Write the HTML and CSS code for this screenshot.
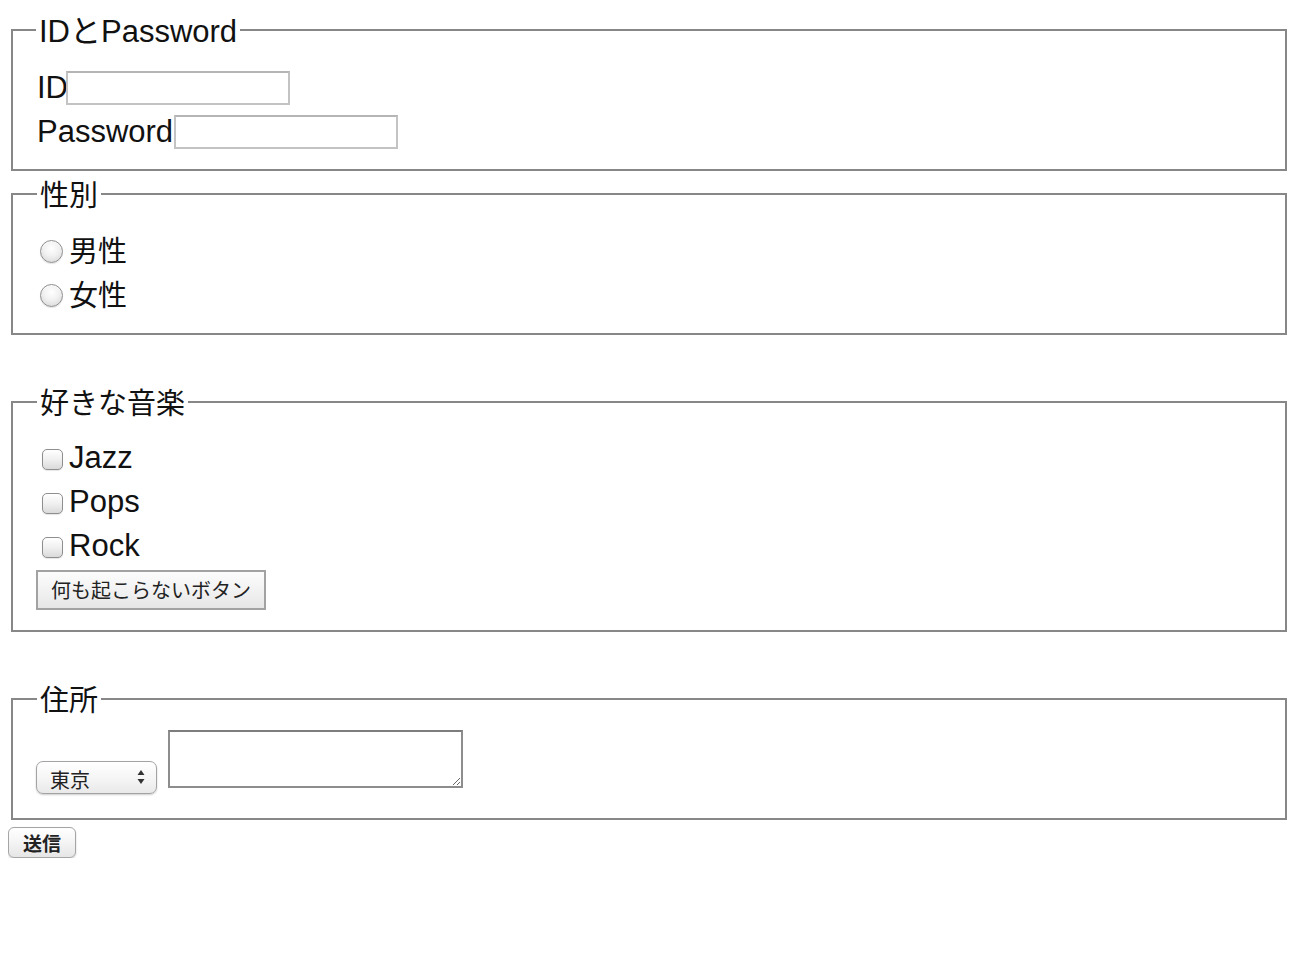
FILE: index.html
```html
<!DOCTYPE html>
<html lang="ja">
<head>
<meta charset="utf-8">
<title>Form</title>
<link rel="stylesheet" href="styles.css">
</head>
<body>
<form class="form">
  <fieldset class="fs fs-first">
    <legend class="legend legend-latin">IDとPassword</legend>
    <div class="row row-latin"><label class="label" for="id">ID</label><input class="text text-id" id="id" type="text"></div>
    <div class="row row-latin"><label class="label" for="pw">Password</label><input class="text" id="pw" type="password"></div>
  </fieldset>
  <fieldset class="fs fs-sex">
    <legend class="legend">性別</legend>
    <div class="row row-cjk"><input class="radio" type="radio" name="sex" id="m"><label for="m">男性</label></div>
    <div class="row row-cjk"><input class="radio" type="radio" name="sex" id="f"><label for="f">女性</label></div>
  </fieldset>
  <fieldset class="fs fs-spaced fs-music">
    <legend class="legend">好きな音楽</legend>
    <div class="row row-latin"><input class="check" type="checkbox" id="jazz"><label for="jazz">Jazz</label></div>
    <div class="row row-latin"><input class="check" type="checkbox" id="pops"><label for="pops">Pops</label></div>
    <div class="row row-latin"><input class="check" type="checkbox" id="rock"><label for="rock">Rock</label></div>
    <button class="btn-plain" type="button">何も起こらないボタン</button>
  </fieldset>
  <fieldset class="fs fs-spaced fs-addr">
    <legend class="legend">住所</legend>
    <div class="addr">
      <span class="select-wrap">
        <select class="select"><option>東京</option><option>大阪</option></select>
        <svg class="select-arrows" width="8" height="16" viewBox="0 0 8 16"><path d="M4 1 L7.5 6 L0.5 6 Z M4 15 L7.5 10 L0.5 10 Z" fill="#333"/></svg>
      </span>
      <textarea class="area"></textarea>
    </div>
  </fieldset>
  <button class="btn-submit" type="submit">送信</button>
</form>
</body>
</html>
```
FILE: styles.css
```css
html, body {
  background: #fff;
}
body {
  margin: 8px;
  font-family: "Liberation Sans", "Noto Sans CJK JP", sans-serif;
  color: #111;
}
.form {
  display: block;
}
.fs {
  display: block;
  margin: 6px 5px 0 3px;
  padding: 19px 20px 15px 24px;
  border: 2px solid #878787;
  min-width: 0;
}
.fs-first {
  margin-top: 5px;
}
.fs-sex {
  padding-top: 16px;
  padding-bottom: 18px;
}
.fs-spaced {
  margin-top: 50px;
}
.fs-music {
  padding-top: 17px;
  padding-bottom: 20px;
}
.fs-addr {
  padding-top: 14px;
  padding-bottom: 24px;
}
.legend {
  padding: 4px 3px 0 3px;
  margin-left: 0;
  font-size: 29px;
  line-height: 30px;
  color: #111;
}
.legend-latin {
  font-size: 31px;
  margin-left: -1px;
  padding-top: 3px;
  line-height: 31px;
}
.row {
  display: flex;
  align-items: center;
  height: 44px;
}
.row-latin {
  font-size: 31px;
}
.row-cjk {
  font-size: 29px;
}
.label {
  display: block;
}
.text {
  width: 224px;
  height: 34px;
  box-sizing: border-box;
  margin: 0 0 0 1px;
  border: 2px solid #c3c3c3;
  border-top-color: #b5b5b5;
  background: #fff;
  padding: 0 4px;
  font-size: 18px;
}
.text-id {
  margin-left: -2px;
}
.radio {
  appearance: none;
  -webkit-appearance: none;
  width: 23px;
  height: 23px;
  margin: 4px 6px 0 3px;
  border: 1px solid #8e8e8e;
  border-radius: 50%;
  background: radial-gradient(circle at 50% 35%, #ffffff 0%, #f1f1f1 45%, #d2d2d2 100%);
  box-shadow: inset 0 1px 1px rgba(255,255,255,0.8), 0 1px 1px rgba(0,0,0,0.1);
  flex: none;
}
.check {
  appearance: none;
  -webkit-appearance: none;
  width: 21px;
  height: 21px;
  margin: 2px 6px 0 5px;
  border: 1px solid #8e8e8e;
  border-radius: 5px;
  background: linear-gradient(#ffffff, #f0f0f0 50%, #dadada);
  box-shadow: 0 1px 1px rgba(0,0,0,0.1);
  flex: none;
}
.btn-plain {
  display: block;
  margin: 2px 0 0 -1px;
  width: 230px;
  height: 40px;
  box-sizing: border-box;
  padding: 0 0 2px 0;
  border: 2px solid #a2a2a2;
  border-radius: 0;
  background: linear-gradient(#fcfcfc, #f0f0f0 60%, #e6e6e6);
  font-family: "Noto Sans CJK JP", sans-serif;
  font-size: 20px;
  color: #222;
}
.addr {
  display: flex;
  align-items: flex-start;
  gap: 11px;
}
.select-wrap {
  position: relative;
  display: block;
  margin-top: 31px;
  margin-left: -1px;
}
.select {
  appearance: none;
  -webkit-appearance: none;
  display: block;
  width: 121px;
  height: 33px;
  box-sizing: border-box;
  padding: 3px 0 0 13px;
  border: 1px solid #a3a3a3;
  border-radius: 7px;
  background: linear-gradient(#ffffff, #f6f6f6 50%, #e9e9e9);
  box-shadow: 0 1px 2px rgba(0,0,0,0.2);
  font-family: "Noto Sans CJK JP", sans-serif;
  font-size: 20px;
  color: #222;
}
.select-arrows {
  position: absolute;
  left: 101px;
  top: 8px;
  pointer-events: none;
}
.area {
  display: block;
  width: 295px;
  height: 58px;
  box-sizing: border-box;
  margin: 0;
  border: 2px solid #8d8d8d;
  border-top-color: #7d7d7d;
  background: #fff;
}
.btn-submit {
  display: block;
  margin: 7px 0 0 0;
  width: 68px;
  height: 31px;
  box-sizing: border-box;
  padding: 0 0 1px 0;
  border: 1px solid #a5a5a5;
  border-radius: 6px;
  background: linear-gradient(#ffffff, #f4f4f4 50%, #e6e6e6);
  box-shadow: 0 1px 2px rgba(0,0,0,0.2);
  font-family: "Noto Sans CJK JP", sans-serif;
  font-size: 19px;
  font-weight: bold;
  color: #222;
}
```
